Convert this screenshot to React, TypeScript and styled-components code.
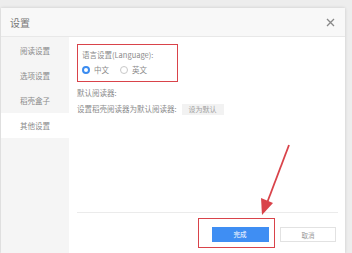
import React, { useState } from 'react';
import styled, { createGlobalStyle } from 'styled-components';

/* Estilos globais da página */
const Global = createGlobalStyle`
  html, body {
    margin: 0;
    padding: 0;
    background: #ededed;
    font-family: "Noto Sans CJK SC", "Noto Sans", sans-serif;
    overflow: hidden;
  }
`;

const RED = '#d9434a';

const Page = styled.div`
  position: relative;
  width: 352px;
  height: 253px;
  padding: 8px 7px 0 1px;
  box-sizing: border-box;
`;

const Dialog = styled.div`
  width: 344px;
  height: 245px;
  background: #fff;
  box-shadow: 0 0 3px rgba(0, 0, 0, 0.16);
  display: flex;
  flex-direction: column;
`;

const TitleBar = styled.div`
  height: 29px;
  flex-shrink: 0;
  display: flex;
  align-items: center;
  justify-content: space-between;
  padding: 0 9px 0 9px;
  background: #f8f8f8;
  border-bottom: 1px solid #e8e8e8;
  box-sizing: border-box;
  font-size: 10px;
  color: #777;
`;

const Close = styled.button`
  border: none;
  background: none;
  padding: 0;
  width: 12px;
  height: 12px;
  display: flex;
  align-items: center;
  justify-content: center;
`;

const Body = styled.div`
  flex: 1;
  display: flex;
  min-height: 0;
`;

const Sidebar = styled.div`
  width: 68px;
  background: #f5f5f5;
  padding-top: 1px;
  display: flex;
  flex-direction: column;
`;

const NavItem = styled.div<{ $active?: boolean }>`
  height: 25px;
  display: flex;
  align-items: center;
  padding-left: 19px;
  font-size: 7.5px;
  color: #8a8a8a;
  background: ${p => (p.$active ? '#fff' : 'transparent')};
`;

const Content = styled.div`
  flex: 1;
  display: flex;
  flex-direction: column;
  padding: 7px 7px 0 8px;
  font-size: 7.5px;
  color: #8a8a8a;
`;

const LangBox = styled.div`
  width: 101px;
  height: 38px;
  box-sizing: border-box;
  border: 1.5px solid ${RED};
  padding: 5px 4px;
  display: flex;
  flex-direction: column;
  gap: 5px;
`;

const Line = styled.div`
  line-height: 10px;
  height: 10px;
  white-space: nowrap;
  display: flex;
  align-items: center;
`;

const RadioRow = styled.div`
  display: flex;
  align-items: center;
  gap: 11px;
  height: 10px;
`;

const Radio = styled.label`
  display: flex;
  align-items: center;
  gap: 4px;
  line-height: 10px;
`;

const Dot = styled.span<{ $on?: boolean }>`
  width: 8px;
  height: 8px;
  box-sizing: border-box;
  border-radius: 50%;
  border: ${p => (p.$on ? '2.5px solid #3b8cf0' : '1px solid #c8c8c8')};
  background: #fff;
`;

const Section = styled.div`
  margin-top: 6px;
  display: flex;
  flex-direction: column;
  gap: 6px;
`;

const SmallButton = styled.span`
  margin-left: 5px;
  width: 42px;
  height: 11px;
  background: #f2f2f2;
  color: #a0a0a0;
  font-size: 7px;
  display: flex;
  align-items: center;
  justify-content: center;
`;

const Footer = styled.div`
  margin-top: auto;
  height: 41px;
  box-sizing: border-box;
  border-top: 1px solid #ebebeb;
  display: flex;
  justify-content: flex-end;
  align-items: flex-start;
  padding: 5px 2px 0 0;
  gap: 5px;
`;

const Highlight = styled.div`
  border: 1.5px solid ${RED};
  width: 77px;
  height: 30px;
  box-sizing: border-box;
  padding: 7.5px 4.5px 0 12.5px;
`;

const Btn = styled.button<{ $primary?: boolean }>`
  height: 15px;
  width: ${p => (p.$primary ? 57 : 56)}px;
  padding: 0;
  font-family: inherit;
  font-size: 6.5px;
  border: 1px solid ${p => (p.$primary ? '#3f8ef3' : '#e2e2e2')};
  background: ${p => (p.$primary ? '#3f8ef3' : '#fff')};
  color: ${p => (p.$primary ? '#fff' : '#999')};
  display: flex;
  align-items: center;
  justify-content: center;
`;

const CancelWrap = styled.div`
  padding-top: 9px;
`;

/* Seta vermelha de anotação sobre o diálogo */
const Arrow = styled.svg`
  position: absolute;
  left: 0;
  top: 0;
  pointer-events: none;
`;

const items = ['阅读设置', '选项设置', '稻壳盒子', '其他设置'];

export default function App() {
  const [lang, setLang] = useState<'zh' | 'en'>('zh');
  return (
    <>
      <Global />
      <Page>
        <Dialog>
          <TitleBar>
            <span>设置</span>
            <Close>
              <svg width="9" height="9" viewBox="0 0 9 9">
                <path d="M1 1L8 8M8 1L1 8" stroke="#888" strokeWidth="1.3" />
              </svg>
            </Close>
          </TitleBar>
          <Body>
            <Sidebar>
              {items.map((t, i) => (
                <NavItem key={t} $active={i === 3}>{t}</NavItem>
              ))}
            </Sidebar>
            <Content>
              <LangBox>
                <Line>语言设置(Language):</Line>
                <RadioRow>
                  <Radio onClick={() => setLang('zh')}>
                    <Dot $on={lang === 'zh'} />中文
                  </Radio>
                  <Radio onClick={() => setLang('en')}>
                    <Dot $on={lang === 'en'} />英文
                  </Radio>
                </RadioRow>
              </LangBox>
              <Section>
                <Line>默认阅读器:</Line>
                <Line>
                  设置稻壳阅读器为默认阅读器:
                  <SmallButton>设为默认</SmallButton>
                </Line>
              </Section>
              <Footer>
                <Highlight>
                  <Btn $primary>完成</Btn>
                </Highlight>
                <CancelWrap>
                  <Btn>取消</Btn>
                </CancelWrap>
              </Footer>
            </Content>
          </Body>
        </Dialog>
        <Arrow width="352" height="253" viewBox="0 0 352 253">
          <line x1="289" y1="145" x2="267" y2="203" stroke={RED} strokeWidth="1.8" />
          <polygon points="262,215 261,198 273,203" fill={RED} />
        </Arrow>
      </Page>
    </>
  );
}
